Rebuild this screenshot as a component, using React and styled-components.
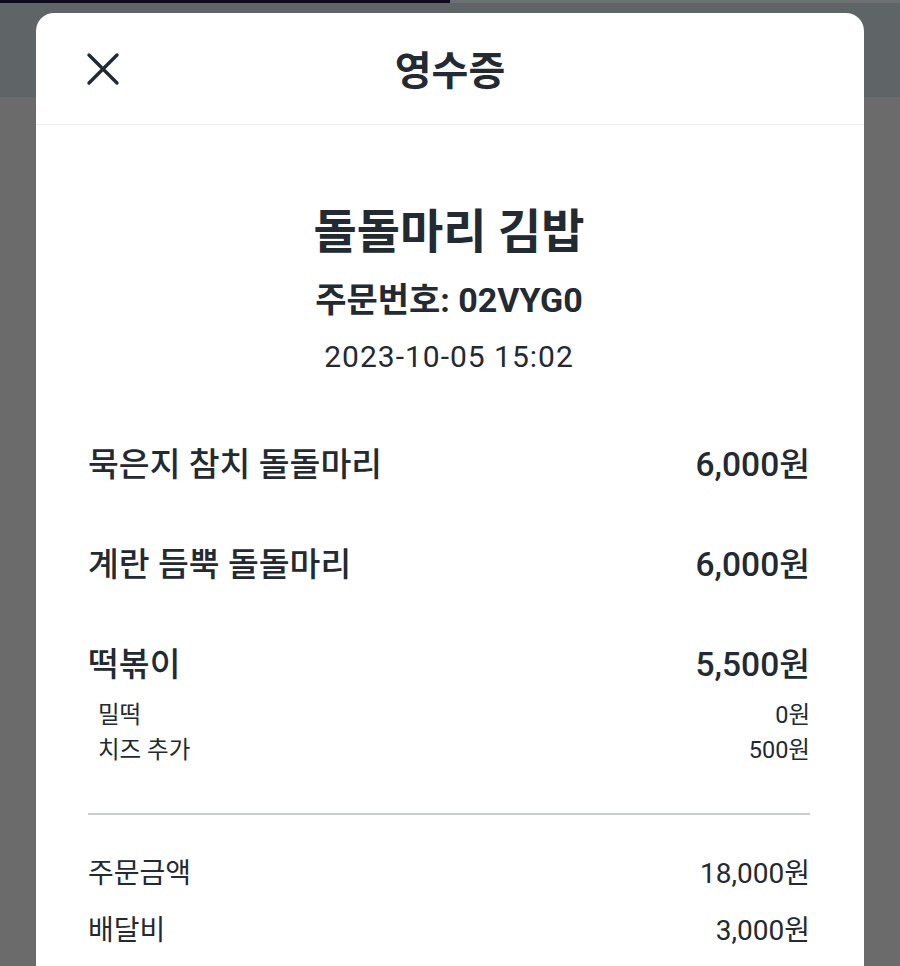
import styled, { createGlobalStyle } from 'styled-components'

const GlobalStyle = createGlobalStyle`
  html, body {
    margin: 0;
    padding: 0;
    height: 100%;
    background: #6b6b6b;
    overflow: hidden;
  }
  body {
    font-family: Roboto, "Noto Sans CJK KR", sans-serif;
    color: #222a32;
  }
`

const items = [
  { name: '묵은지 참치 돌돌마리', price: '6,000원' },
  { name: '계란 듬뿍 돌돌마리', price: '6,000원' },
  {
    name: '떡볶이',
    price: '5,500원',
    options: [
      { name: '밀떡', price: '0원' },
      { name: '치즈 추가', price: '500원' },
    ],
  },
]

export default function App() {
  return (
    <Page>
      <GlobalStyle />
      <TopBar>
        <StatusStrip>
          <StripDark />
          <StripLight />
        </StatusStrip>
      </TopBar>

      <Sheet>
        <SheetHeader>
          <CloseButton aria-label="닫기">
            <svg width="34" height="34" viewBox="0 0 34 34" fill="none">
              <path d="M3 3 L31 31 M31 3 L3 31" stroke="#222a32" strokeWidth="3.4" strokeLinecap="round" />
            </svg>
          </CloseButton>
          <HeaderTitle>영수증</HeaderTitle>
          <span />
        </SheetHeader>

        <Body>
          <StoreBlock>
            <StoreName>돌돌마리 김밥</StoreName>
            <OrderNo>주문번호: 02VYG0</OrderNo>
            <OrderDate>2023-10-05 15:02</OrderDate>
          </StoreBlock>

          <ItemList>
            {items.map((item) => (
              <Item key={item.name}>
                <ItemRow>
                  <span>{item.name}</span>
                  <span>{item.price}</span>
                </ItemRow>
                {item.options && (
                  <Options>
                    {item.options.map((opt) => (
                      <OptionRow key={opt.name}>
                        <span>{opt.name}</span>
                        <span>{opt.price}</span>
                      </OptionRow>
                    ))}
                  </Options>
                )}
              </Item>
            ))}
          </ItemList>

          <Divider />

          <Summary>
            <SummaryRow>
              <span>주문금액</span>
              <span>18,000원</span>
            </SummaryRow>
            <SummaryRow>
              <span>배달비</span>
              <span>3,000원</span>
            </SummaryRow>
          </Summary>
        </Body>
      </Sheet>
    </Page>
  )
}

const Page = styled.div`
  position: relative;
  width: 900px;
  height: 966px;
  background: #6b6b6b;
  overflow: hidden;
`

const TopBar = styled.div`
  height: 97px;
  background: #5f6466;
`

const StatusStrip = styled.div`
  display: flex;
  height: 3px;
`

const StripDark = styled.div`
  width: 450px;
  background: #0e0c1c;
`

const StripLight = styled.div`
  flex: 1;
  background: #6d7072;
`

const Sheet = styled.div`
  position: absolute;
  top: 13px;
  left: 36px;
  width: 828px;
  height: 1000px;
  background: #fff;
  border-radius: 18px 18px 0 0;
`

const SheetHeader = styled.div`
  display: grid;
  grid-template-columns: 1fr auto 1fr;
  align-items: center;
  height: 111px;
  border-bottom: 1.5px solid #ececec;
`

const CloseButton = styled.button`
  justify-self: start;
  display: flex;
  align-items: center;
  justify-content: center;
  margin-left: 50px;
  padding: 0;
  border: 0;
  background: none;
  cursor: pointer;
`

const HeaderTitle = styled.h1`
  margin: 0;
  padding-top: 6px;
  font-size: 40px;
  font-weight: 700;
  line-height: 1;
`

const Body = styled.div`
  padding: 0 54px 0 52px;
`

const StoreBlock = styled.div`
  display: flex;
  flex-direction: column;
  align-items: center;
  gap: 17px;
  margin-top: 78px;
`

const StoreName = styled.div`
  font-size: 47px;
  font-weight: 700;
  line-height: 58px;
`

const OrderNo = styled.div`
  font-size: 34px;
  font-weight: 700;
  line-height: 44px;
`

const OrderDate = styled.div`
  font-size: 30px;
  font-weight: 400;
  line-height: 36px;
  letter-spacing: 1px;
`

const ItemList = styled.div`
  display: flex;
  flex-direction: column;
  gap: 56px;
  margin-top: 68px;
`

const Item = styled.div`
  display: flex;
  flex-direction: column;
  gap: 11px;
`

const Row = styled.div`
  display: flex;
  justify-content: space-between;
  align-items: center;
`

const ItemRow = styled(Row)`
  font-size: 33.5px;
  font-weight: 500;
  line-height: 44px;
`

const Options = styled.div`
  display: flex;
  flex-direction: column;
  padding-left: 10px;
`

const OptionRow = styled(Row)`
  font-size: 23.5px;
  font-weight: 400;
  line-height: 35px;
`

const Divider = styled.hr`
  margin: 45px 0 0;
  border: 0;
  height: 1.5px;
  background: #c9cdd1;
`

const Summary = styled.div`
  display: flex;
  flex-direction: column;
  gap: 17px;
  margin-top: 39px;
`

const SummaryRow = styled(Row)`
  font-size: 28px;
  font-weight: 400;
  line-height: 40px;
`
